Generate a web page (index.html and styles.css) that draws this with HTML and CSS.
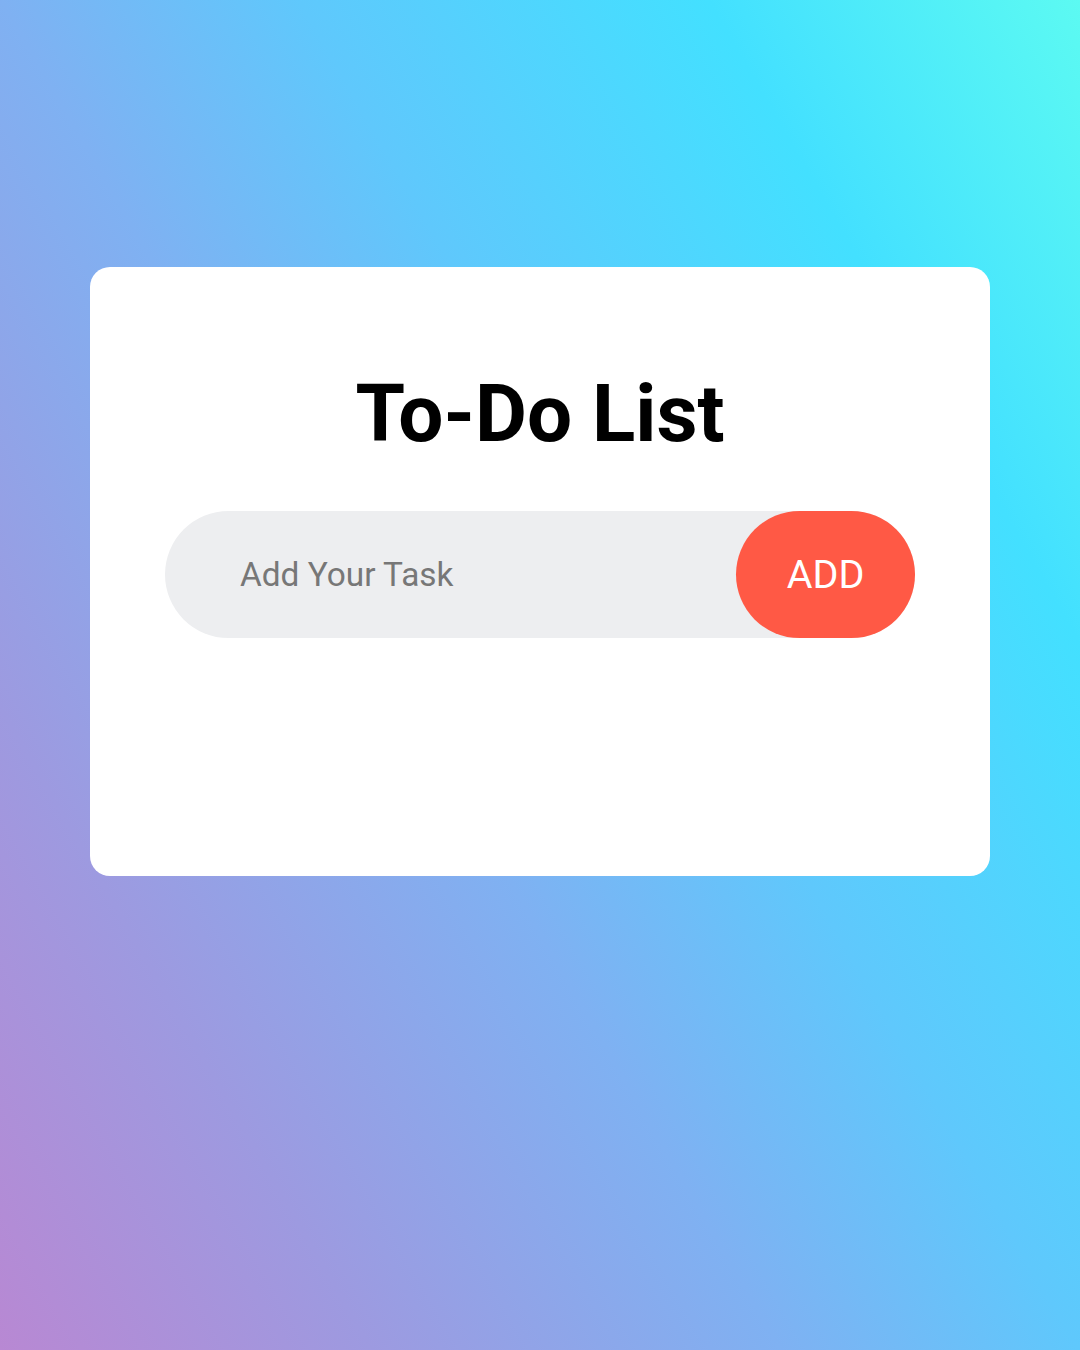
FILE: index.html
```html
<!DOCTYPE html>
<html lang="en">
<head>
<meta charset="utf-8">
<title>To-Do List</title>
<link rel="stylesheet" href="styles.css">
</head>
<body>
<div class="page">
  <div class="card">
    <h1 class="title">To-Do List</h1>
    <div class="row">
      <input class="task-input" type="text" placeholder="Add Your Task">
      <button class="add-btn">ADD</button>
    </div>
  </div>
</div>
</body>
</html>
```
FILE: styles.css
```css
* { box-sizing: border-box; }
html, body { margin: 0; padding: 0; }
body {
  font-family: Roboto, "Liberation Sans", sans-serif;
  width: 1080px;
  height: 1350px;
  overflow: hidden;
}
.page {
  width: 1080px;
  height: 1350px;
  padding: 267px 90px 0;
  background: linear-gradient(60deg, #b888d3 0%, #9d9ae0 20%, #7fb1f2 42%, #5fc8fc 58%, #43e0ff 80%, #5cfaf2 100%);
}
.card {
  width: 900px;
  height: 609px;
  background: #fff;
  border-radius: 20px;
  padding: 107px 75px 0;
  display: flex;
  flex-direction: column;
  align-items: stretch;
}
.title {
  margin: 0;
  font-size: 80px;
  line-height: 80px;
  font-weight: 700;
  color: #000;
  text-align: center;
}
.row {
  margin-top: 57px;
  height: 127px;
  display: flex;
  align-items: stretch;
  background: #edeef0;
  border-radius: 64px;
}
.task-input {
  flex: 1;
  min-width: 0;
  border: none;
  outline: none;
  background: transparent;
  padding: 0 0 0 75px;
  font-family: Roboto, "Liberation Sans", sans-serif;
  font-size: 33.4px;
  color: #333;
}
.task-input::placeholder { color: #777; }
.add-btn {
  width: 179px;
  border: none;
  border-radius: 64px;
  background: #ff5945;
  color: #fff;
  font-family: Roboto, "Liberation Sans", sans-serif;
  font-size: 39.5px;
  padding: 0;
}
```
